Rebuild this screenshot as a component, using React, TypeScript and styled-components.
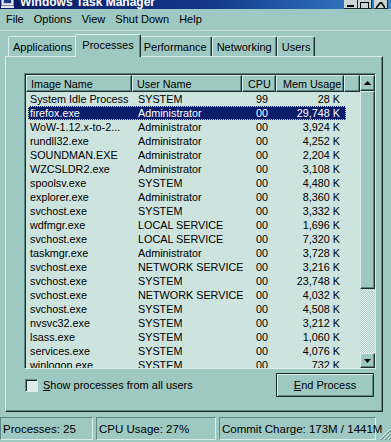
import React from "react";
import styled, { createGlobalStyle, css } from "styled-components";

const FACE = "#9ec8c2";
const LIGHT = "#daefeb";
const SHADOW = "#5e8883";
const DARK = "#1c2e2c";
const LIST_BG = "#cde3de";
const SELECT = "#0c1d6c";

const GlobalStyle = createGlobalStyle`
  html, body {
    margin: 0;
    padding: 0;
    width: 391px;
    height: 442px;
    overflow: hidden;
    background: ${FACE};
  }
  body {
    font-family: "Liberation Sans", Arial, sans-serif;
    font-size: 10.8px;
    color: #000;
  }
`;

const raised = css`
  border-top: 1px solid ${LIGHT};
  border-left: 1px solid ${LIGHT};
  border-right: 1px solid ${DARK};
  border-bottom: 1px solid ${DARK};
  box-shadow: inset -1px -1px 0 ${SHADOW};
`;

const sunken = css`
  border-top: 1px solid ${SHADOW};
  border-left: 1px solid ${SHADOW};
  border-right: 1px solid ${LIGHT};
  border-bottom: 1px solid ${LIGHT};
  box-shadow: inset 1px 1px 0 ${DARK};
`;

const Window = styled.div`
  display: flex;
  flex-direction: column;
  width: 391px;
  height: 442px;
  background: ${FACE};
`;

const TitleBar = styled.div`
  height: 9px;
  display: flex;
  align-items: flex-end;
  background: linear-gradient(90deg, #0a1a62 0%, #143a8c 55%, #3b86cf 100%);
  overflow: hidden;
  padding-left: 1px;
`;

const TitleText = styled.div`
  font-weight: bold;
  font-size: 12px;
  line-height: 12px;
  color: #fff;
  margin: 0 0 1px 5px;
  flex: 1;
  white-space: nowrap;
`;

const CaptionButtons = styled.div`
  display: flex;
  align-self: flex-start;
  margin-right: 3px;
`;

const CaptionButton = styled.div<{ $gap?: number }>`
  width: 13px;
  height: 8px;
  margin-left: ${(p) => p.$gap ?? 0}px;
  background: #c9d6d4;
  border-right: 1px solid ${DARK};
  border-bottom: 1px solid ${DARK};
  display: flex;
  align-items: flex-end;
  justify-content: center;
`;

const MenuBar = styled.div`
  height: 21px;
  display: flex;
  align-items: center;
  padding-left: 1px;
  border-bottom: 1px solid #bddcd7;
  font-size: 11px;
`;

const MenuItem = styled.div`
  padding: 0 5px;
  line-height: 21px;
  white-space: nowrap;
`;

const TabStrip = styled.div`
  height: 25px;
  display: flex;
  align-items: flex-end;
  padding-left: 8px;
  position: relative;
  z-index: 1;
  font-size: 11px;
`;

const Tab = styled.div<{ $active?: boolean }>`
  height: ${(p) => (p.$active ? 23 : 20)}px;
  padding: 0 ${(p) => (p.$active ? 6 : 4)}px;
  margin: 0 ${(p) => (p.$active ? -2 : 0)}px ${(p) => (p.$active ? -1 : 0)}px;
  box-sizing: border-box;
  display: flex;
  align-items: center;
  padding-bottom: ${(p) => (p.$active ? 3 : 0)}px;
  background: ${FACE};
  border-top: 1px solid ${LIGHT};
  border-left: 1px solid ${LIGHT};
  border-right: 1px solid ${DARK};
  border-radius: 2px 2px 0 0;
  box-shadow: inset -1px 0 0 ${SHADOW};
  white-space: nowrap;
  position: relative;
  z-index: ${(p) => (p.$active ? 2 : 0)};
`;

const TabPanel = styled.div`
  margin-left: 5px;
  width: 378px;
  box-sizing: border-box;
  padding: 16px 6px 14px 18px;
  ${raised}
`;

const ListBox = styled.div`
  height: 296px;
  box-sizing: border-box;
  display: flex;
  background: ${LIST_BG};
  overflow: hidden;
  border-top: 1px solid ${SHADOW};
  border-left: 1px solid ${SHADOW};
  border-right: 1px solid ${LIGHT};
  border-bottom: 1px solid ${LIGHT};
  padding: 1px 0 0 1px;
  box-shadow: inset 1px 1px 0 ${DARK};
`;

const Table = styled.div`
  flex: 1;
  overflow: hidden;
`;

const COLS = "106px 110px 34px 68px 1fr";

const HeaderRow = styled.div`
  display: grid;
  grid-template-columns: ${COLS};
  height: 17px;
`;

const HeaderCell = styled.div<{ $indent?: number }>`
  box-sizing: border-box;
  ${raised}
  background: ${FACE};
  padding-left: ${(p) => p.$indent ?? 4}px;
  line-height: 16px;
  white-space: nowrap;
  overflow: hidden;
`;

const Row = styled.div<{ $selected?: boolean }>`
  display: grid;
  grid-template-columns: 106px 110px 34px 68px;
  width: 318px;
  height: 14px;
  line-height: 14px;
  margin-left: 2px;
  background: ${(p) => (p.$selected ? SELECT : "transparent")};
  color: ${(p) => (p.$selected ? "#fff" : "#000")};
  outline: ${(p) => (p.$selected ? "1px dotted #d8d890" : "none")};
  outline-offset: -1px;
  white-space: nowrap;
`;

const Cell = styled.div<{ $right?: boolean; $pad?: number }>`
  text-align: ${(p) => (p.$right ? "right" : "left")};
  padding-left: ${(p) => (p.$right ? 0 : p.$pad ?? 2)}px;
  padding-right: ${(p) => (p.$right ? p.$pad ?? 0 : 0)}px;
  overflow: hidden;
`;

const ScrollBar = styled.div`
  width: 15px;
  display: flex;
  flex-direction: column;
`;

const ScrollButton = styled.div<{ $h: number }>`
  height: ${(p) => p.$h}px;
  box-sizing: border-box;
  ${raised}
  background: ${FACE};
  display: flex;
  align-items: center;
  justify-content: center;
`;

const Thumb = styled.div`
  height: 198px;
  box-sizing: border-box;
  ${raised}
  background: ${FACE};
`;

const Track = styled.div`
  flex: 1;
  background: repeating-conic-gradient(#e4f0ee 0% 25%, #a9cdc8 0% 50%) 0 0 / 2px 2px;
`;

const Footer = styled.div`
  display: flex;
  align-items: center;
  justify-content: space-between;
  margin-top: 4px;
  padding-left: 1px;
  padding-right: 2px;
  font-size: 11px;
`;

const CheckLabel = styled.label`
  display: flex;
  align-items: center;
  gap: 5px;
  white-space: nowrap;
`;

const CheckBox = styled.span`
  display: inline-block;
  width: 13px;
  height: 13px;
  box-sizing: border-box;
  background: #dcece9;
  ${sunken}
`;

const Button = styled.button`
  width: 98px;
  height: 24px;
  box-sizing: border-box;
  background: ${FACE};
  font-family: "Liberation Sans", Arial, sans-serif;
  font-size: 11px;
  color: #000;
  padding: 0;
  border: 1px solid ${DARK};
  box-shadow: inset 1px 1px 0 ${LIGHT}, inset -1px -1px 0 ${SHADOW};
`;

const StatusBar = styled.div`
  margin-top: 5px;
  height: 24px;
  display: flex;
  gap: 3px;
  align-items: stretch;
  padding-bottom: 1px;
  box-sizing: border-box;
`;

const StatusPanel = styled.div<{ $w: number }>`
  width: ${(p) => p.$w}px;
  box-sizing: border-box;
  border-top: 1px solid ${SHADOW};
  border-left: 1px solid ${SHADOW};
  border-right: 1px solid ${LIGHT};
  border-bottom: 1px solid ${LIGHT};
  padding-left: 2px;
  display: flex;
  align-items: center;
  white-space: nowrap;
  font-size: 11.5px;
`;

const Grip = styled.div`
  flex: 1;
  display: flex;
  align-items: flex-end;
  justify-content: flex-end;
`;

const rows: [string, string, string, string][] = [
  ["System Idle Process", "SYSTEM", "99", "28 K"],
  ["firefox.exe", "Administrator", "00", "29,748 K"],
  ["WoW-1.12.x-to-2...", "Administrator", "00", "3,924 K"],
  ["rundll32.exe", "Administrator", "00", "4,252 K"],
  ["SOUNDMAN.EXE", "Administrator", "00", "2,204 K"],
  ["WZCSLDR2.exe", "Administrator", "00", "3,108 K"],
  ["spoolsv.exe", "SYSTEM", "00", "4,480 K"],
  ["explorer.exe", "Administrator", "00", "8,360 K"],
  ["svchost.exe", "SYSTEM", "00", "3,332 K"],
  ["wdfmgr.exe", "LOCAL SERVICE", "00", "1,696 K"],
  ["svchost.exe", "LOCAL SERVICE", "00", "7,320 K"],
  ["taskmgr.exe", "Administrator", "00", "3,728 K"],
  ["svchost.exe", "NETWORK SERVICE", "00", "3,216 K"],
  ["svchost.exe", "SYSTEM", "00", "23,748 K"],
  ["svchost.exe", "NETWORK SERVICE", "00", "4,032 K"],
  ["svchost.exe", "SYSTEM", "00", "4,508 K"],
  ["nvsvc32.exe", "SYSTEM", "00", "3,212 K"],
  ["lsass.exe", "SYSTEM", "00", "1,060 K"],
  ["services.exe", "SYSTEM", "00", "4,076 K"],
  ["winlogon.exe", "SYSTEM", "00", "732 K"],
];

const tabs = ["Applications", "Processes", "Performance", "Networking", "Users"];
const menus = ["File", "Options", "View", "Shut Down", "Help"];

function Arrow({ up }: { up?: boolean }) {
  return (
    <svg width="7" height="4" viewBox="0 0 7 4">
      <path d={up ? "M3.5 0 L7 4 L0 4 Z" : "M0 0 L7 0 L3.5 4 Z"} fill="#000" />
    </svg>
  );
}

export default function App() {
  return (
    <Window>
      <GlobalStyle />
      <TitleBar>
        <svg width="14" height="9" viewBox="0 0 14 9">
          <rect x="1" y="-4" width="11" height="9" fill="#c8d0d8" stroke="#fff" />
          <rect x="3" y="-2" width="7" height="5" fill="#1a3a80" />
          <rect x="0" y="6" width="13" height="2" fill="#e0e4ea" />
        </svg>
        <TitleText>Windows Task Manager</TitleText>
        <CaptionButtons>
          <CaptionButton>
            <svg width="7" height="3" viewBox="0 0 7 3">
              <rect x="0" y="0" width="7" height="2" fill="#000" />
            </svg>
          </CaptionButton>
          <CaptionButton>
            <svg width="9" height="6" viewBox="0 0 9 6">
              <path d="M0.5 0 V6 M8.5 0 V6 M0 0.5 H9" stroke="#000" strokeWidth="1" fill="none" />
            </svg>
          </CaptionButton>
          <CaptionButton $gap={2}>
            <svg width="9" height="6" viewBox="0 0 9 6">
              <path d="M0 6 L5 0 L9 6" stroke="#000" strokeWidth="1.6" fill="none" />
            </svg>
          </CaptionButton>
        </CaptionButtons>
      </TitleBar>

      <MenuBar>
        {menus.map((m) => (
          <MenuItem key={m}>{m}</MenuItem>
        ))}
      </MenuBar>

      <TabStrip>
        {tabs.map((t) => (
          <Tab key={t} $active={t === "Processes"}>
            {t}
          </Tab>
        ))}
      </TabStrip>

      <TabPanel>
        <ListBox>
          <Table>
            <HeaderRow>
              <HeaderCell>Image Name</HeaderCell>
              <HeaderCell>User Name</HeaderCell>
              <HeaderCell $indent={5}>CPU</HeaderCell>
              <HeaderCell $indent={6}>Mem Usage</HeaderCell>
              <HeaderCell />
            </HeaderRow>
            {rows.map((r, i) => (
              <Row key={i} $selected={i === 1}>
                <Cell>{r[0]}</Cell>
                <Cell $pad={4}>{r[1]}</Cell>
                <Cell $right $pad={10}>{r[2]}</Cell>
                <Cell $right $pad={6}>{r[3]}</Cell>
              </Row>
            ))}
          </Table>
          <ScrollBar>
            <ScrollButton $h={16}>
              <Arrow up />
            </ScrollButton>
            <Thumb />
            <Track />
            <ScrollButton $h={15}>
              <Arrow />
            </ScrollButton>
          </ScrollBar>
        </ListBox>

        <Footer>
          <CheckLabel>
            <CheckBox />
            <span>
              <u>S</u>how processes from all users
            </span>
          </CheckLabel>
          <Button>
            <u>E</u>nd Process
          </Button>
        </Footer>
      </TabPanel>

      <StatusBar>
        <StatusPanel $w={93}>Processes: 25</StatusPanel>
        <StatusPanel $w={120}>CPU Usage: 27%</StatusPanel>
        <StatusPanel $w={157}>Commit Charge: 173M / 1441M</StatusPanel>
        <Grip>
          <svg width="12" height="12" viewBox="0 0 12 12">
            <path d="M11 1 L1 11 M11 5 L5 11 M11 9 L9 11" stroke={LIGHT} strokeWidth="1" />
            <path d="M12 2 L2 12 M12 6 L6 12 M12 10 L10 12" stroke={SHADOW} strokeWidth="1" />
          </svg>
        </Grip>
      </StatusBar>
    </Window>
  );
}
